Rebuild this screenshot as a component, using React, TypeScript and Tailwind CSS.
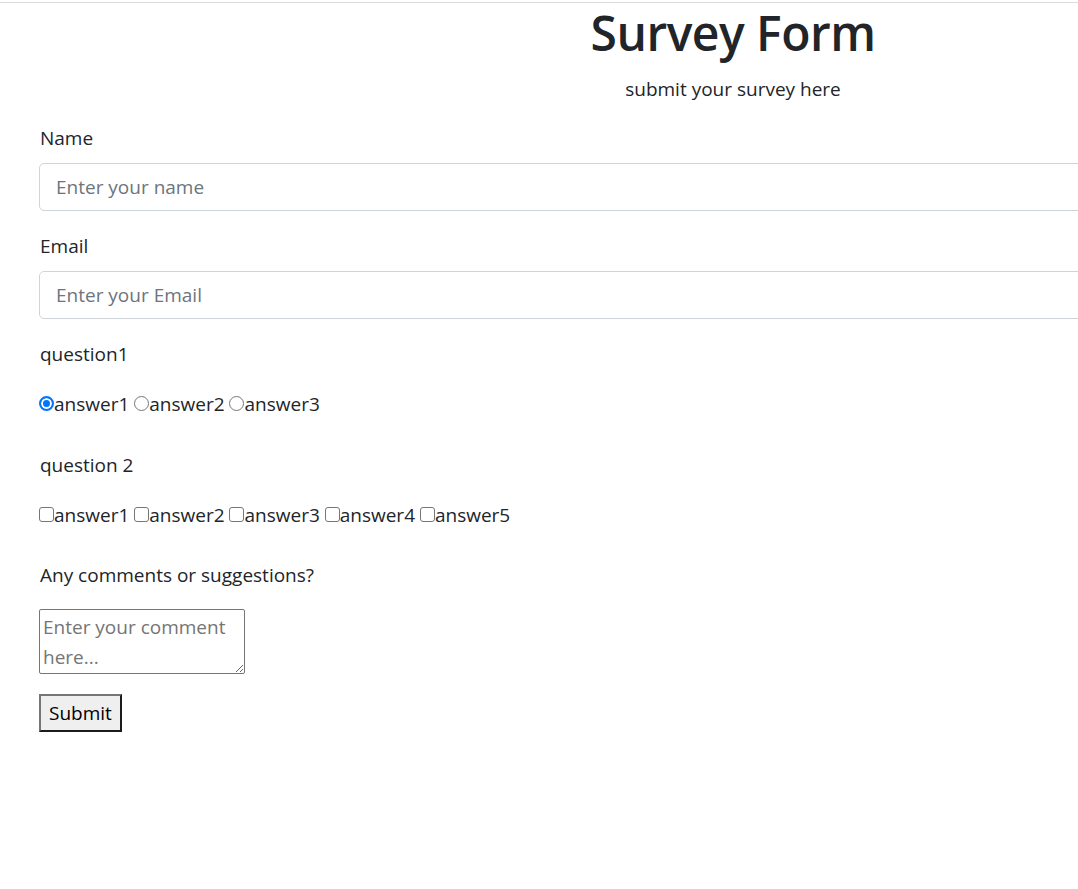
import React from "react";

const radioAnswers = ["answer1", "answer2", "answer3"];
const checkAnswers = ["answer1", "answer2", "answer3", "answer4", "answer5"];

export default function App() {
  return (
    <div className="w-full min-h-[889px] overflow-hidden bg-white font-['Open_Sans','Noto_Sans',sans-serif] text-[19px] leading-[30px] text-[#212529]">
      {/* top rule */}
      <div className="mt-[2px] border-t border-[#dcdcdc]" />

      <div className="w-[1466px] px-[39px]">
        {/* header */}
        <h1 className="text-center text-[48px] font-semibold tracking-[-0.5px] leading-[60px] mb-[11px]">
          Survey Form
        </h1>
        <p className="text-center mb-[19px]">submit your survey here</p>

        <form onSubmit={(e) => e.preventDefault()}>
          {/* name */}
          <label htmlFor="name" className="block pl-px mb-[10px]">
            Name
          </label>
          <input
            id="name"
            type="text"
            placeholder="Enter your name"
            className="block w-full h-[48px] rounded-[5px] border border-[#ced4da] px-[16px] text-[19px] leading-[30px] placeholder:text-[#6c757d] mb-[20px]"
          />

          {/* email */}
          <label htmlFor="email" className="block pl-px mb-[10px]">
            Email
          </label>
          <input
            id="email"
            type="email"
            placeholder="Enter your Email"
            className="block w-full h-[48px] rounded-[5px] border border-[#ced4da] px-[16px] text-[19px] leading-[30px] placeholder:text-[#6c757d] mb-[20px]"
          />

          {/* question 1 */}
          <p className="pl-px mb-[20px]">question1</p>
          <div className="mb-[31px]">
            {radioAnswers.map((a, i) => (
              <React.Fragment key={a}>
                <input
                  type="radio"
                  name="q1"
                  defaultChecked={i === 0}
                  className="appearance-none m-0 w-[15px] h-[15px] rounded-full border border-[#767676] bg-white checked:border-2 checked:border-[#0075ff] checked:bg-[#0075ff] checked:shadow-[inset_0_0_0_2px_white]"
                />
                <span>{a}</span>
                {i < radioAnswers.length - 1 ? " " : null}
              </React.Fragment>
            ))}
          </div>

          {/* question 2 */}
          <p className="pl-px mb-[20px]">question 2</p>
          <div className="mb-[30px]">
            {checkAnswers.map((a, i) => (
              <React.Fragment key={a}>
                <input
                  type="checkbox"
                  name="q2"
                  className="appearance-none m-0 w-[15px] h-[15px] rounded-[3px] border border-[#767676] bg-white checked:bg-[#0075ff] checked:border-[#0075ff]"
                />
                <span>{a}</span>
                {i < checkAnswers.length - 1 ? " " : null}
              </React.Fragment>
            ))}
          </div>

          {/* comments */}
          <p className="pl-px mb-[19px]">Any comments or suggestions?</p>
          <textarea
            placeholder="Enter your comment here..."
            className="block w-[206px] h-[65px] rounded-[2px] border border-[#767676] px-[3px] py-[2px] text-[19px] leading-[30px] placeholder:text-[#757575] mb-[20px]"
          />

          <button
            type="submit"
            className="block h-[38px] bg-[#efefef] px-[8px] border-2 border-t-[#767676] border-l-[#767676] border-b-[#1b1b1b] border-r-[#1b1b1b] text-[19px] leading-[30px] text-black"
          >
            Submit
          </button>
        </form>
      </div>
    </div>
  );
}
